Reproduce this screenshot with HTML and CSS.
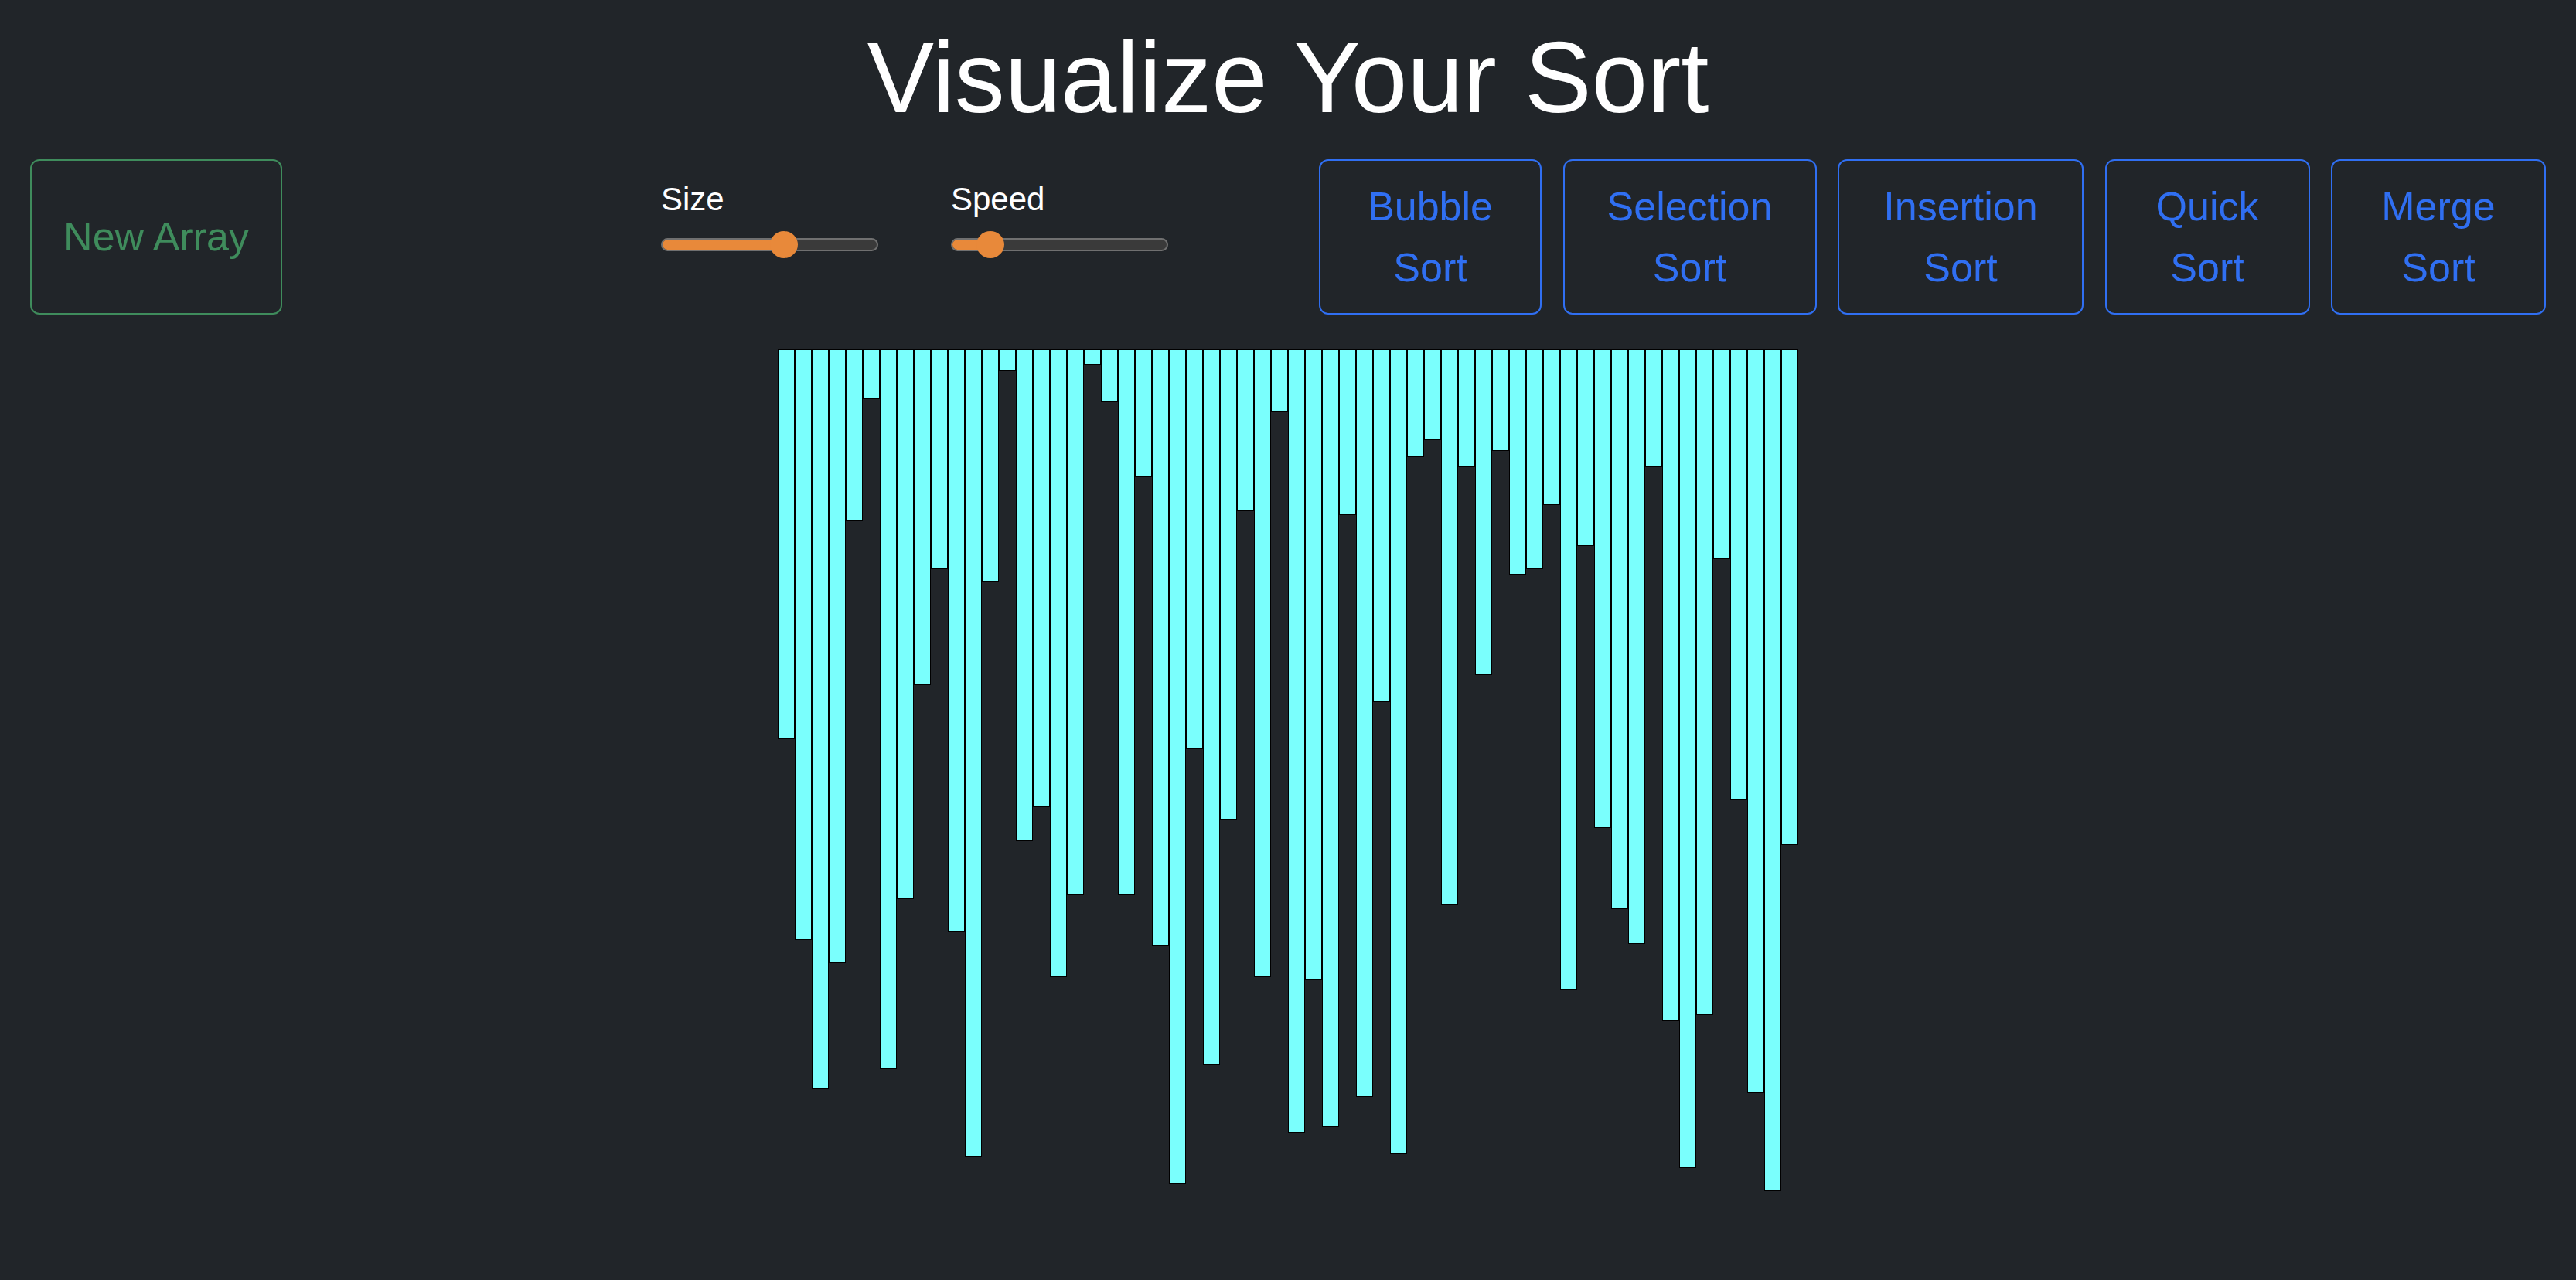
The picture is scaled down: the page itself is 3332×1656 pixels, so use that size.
FILE: index.html
```html
<!DOCTYPE html>
<html lang="en">
<head>
<meta charset="utf-8">
<title>Visualize Your Sort</title>
<link rel="stylesheet" href="styles.css">
</head>
<body>
<header class="page-header">
  <h1 class="title">Visualize Your Sort</h1>
</header>
<nav class="controls">
  <button class="btn btn-new">New Array</button>
  <div class="sliders">
    <div class="control">
      <label class="control-label">Size</label>
      <div class="track" style="--pos: 56.9%">
        <div class="track-fill"></div>
        <div class="track-thumb"></div>
      </div>
    </div>
    <div class="control">
      <label class="control-label">Speed</label>
      <div class="track" style="--pos: 18.1%">
        <div class="track-fill"></div>
        <div class="track-thumb"></div>
      </div>
    </div>
  </div>
  <div class="sorts">
    <button class="btn btn-sort btn-bubble">Bubble Sort</button>
    <button class="btn btn-sort btn-selection">Selection Sort</button>
    <button class="btn btn-sort btn-insertion">Insertion Sort</button>
    <button class="btn btn-sort btn-quick">Quick Sort</button>
    <button class="btn btn-sort btn-merge">Merge Sort</button>
  </div>
</nav>
<main class="bars">
  <div class="bar" style="height:504px"></div>
  <div class="bar" style="height:764px"></div>
  <div class="bar" style="height:957px"></div>
  <div class="bar" style="height:794px"></div>
  <div class="bar" style="height:222px"></div>
  <div class="bar" style="height:64px"></div>
  <div class="bar" style="height:931px"></div>
  <div class="bar" style="height:711px"></div>
  <div class="bar" style="height:434px"></div>
  <div class="bar" style="height:284px"></div>
  <div class="bar" style="height:754px"></div>
  <div class="bar" style="height:1045px"></div>
  <div class="bar" style="height:301px"></div>
  <div class="bar" style="height:28px"></div>
  <div class="bar" style="height:636px"></div>
  <div class="bar" style="height:592px"></div>
  <div class="bar" style="height:812px"></div>
  <div class="bar" style="height:706px"></div>
  <div class="bar" style="height:20px"></div>
  <div class="bar" style="height:68px"></div>
  <div class="bar" style="height:706px"></div>
  <div class="bar" style="height:165px"></div>
  <div class="bar" style="height:772px"></div>
  <div class="bar" style="height:1080px"></div>
  <div class="bar" style="height:517px"></div>
  <div class="bar" style="height:926px"></div>
  <div class="bar" style="height:609px"></div>
  <div class="bar" style="height:209px"></div>
  <div class="bar" style="height:812px"></div>
  <div class="bar" style="height:81px"></div>
  <div class="bar" style="height:1014px"></div>
  <div class="bar" style="height:816px"></div>
  <div class="bar" style="height:1006px"></div>
  <div class="bar" style="height:214px"></div>
  <div class="bar" style="height:967px"></div>
  <div class="bar" style="height:456px"></div>
  <div class="bar" style="height:1041px"></div>
  <div class="bar" style="height:139px"></div>
  <div class="bar" style="height:117px"></div>
  <div class="bar" style="height:719px"></div>
  <div class="bar" style="height:152px"></div>
  <div class="bar" style="height:421px"></div>
  <div class="bar" style="height:131px"></div>
  <div class="bar" style="height:292px"></div>
  <div class="bar" style="height:284px"></div>
  <div class="bar" style="height:201px"></div>
  <div class="bar" style="height:829px"></div>
  <div class="bar" style="height:254px"></div>
  <div class="bar" style="height:619px"></div>
  <div class="bar" style="height:724px"></div>
  <div class="bar" style="height:769px"></div>
  <div class="bar" style="height:152px"></div>
  <div class="bar" style="height:869px"></div>
  <div class="bar" style="height:1059px"></div>
  <div class="bar" style="height:861px"></div>
  <div class="bar" style="height:271px"></div>
  <div class="bar" style="height:583px"></div>
  <div class="bar" style="height:962px"></div>
  <div class="bar" style="height:1089px"></div>
  <div class="bar" style="height:641px"></div>
</main>
</body>
</html>
```

FILE: styles.css
```css
* {
  box-sizing: border-box;
}

html, body {
  margin: 0;
  background: #212529;
}

body {
  padding: 0 39px;
  font-family: "Liberation Sans", Arial, Helvetica, sans-serif;
  color: #ffffff;
  min-height: 1656px;
}

.page-header {
  display: flex;
  justify-content: center;
}

.title {
  margin: 25px 0 31px;
  font-size: 130px;
  line-height: 150px;
  font-weight: 400;
  color: #ffffff;
}

.controls {
  display: flex;
  align-items: flex-start;
}

.btn {
  height: 201px;
  margin: 0;
  background: transparent;
  border: 2px solid;
  border-radius: 12px;
  font-family: inherit;
  font-size: 52px;
  line-height: 79px;
  display: flex;
  align-items: center;
  justify-content: center;
  text-align: center;
  cursor: pointer;
}

.btn-new {
  width: 326px;
  color: #3f8c5c;
  border-color: #3f8c5c;
  padding: 0 20px;
}

.sliders {
  display: flex;
  gap: 94px;
  margin-left: 490px;
  padding-top: 28px;
}

.control {
  display: flex;
  flex-direction: column;
  width: 281px;
}

.control-label {
  font-size: 42px;
  line-height: 48px;
  color: #ffffff;
}

.track {
  position: relative;
  margin-top: 26px;
  width: 281px;
  height: 17px;
  border: 2px solid #707070;
  border-radius: 9px;
  background: #3a3a3a;
}

.track-fill {
  width: var(--pos);
  height: 100%;
  background: #e8893a;
  border-radius: 7px 0 0 7px;
}

.track-thumb {
  position: absolute;
  top: 50%;
  left: var(--pos);
  width: 36px;
  height: 35px;
  margin: -17.5px 0 0 -19px;
  border-radius: 50%;
  background: #e8893a;
}

.sorts {
  display: flex;
  gap: 27.5px;
  margin-left: auto;
}

.btn-sort {
  color: #306ff2;
  border-color: #306ff2;
  padding: 0 30px;
}

.btn-bubble { width: 288px; }
.btn-selection { width: 328px; }
.btn-insertion { width: 318px; }
.btn-quick { width: 265px; }
.btn-merge { width: 278px; }

.bars {
  display: flex;
  justify-content: center;
  align-items: flex-start;
  margin-top: 45px;
}

.bar {
  width: 22px;
  border: 1px solid #000000;
  background: #7afffd;
}
```
